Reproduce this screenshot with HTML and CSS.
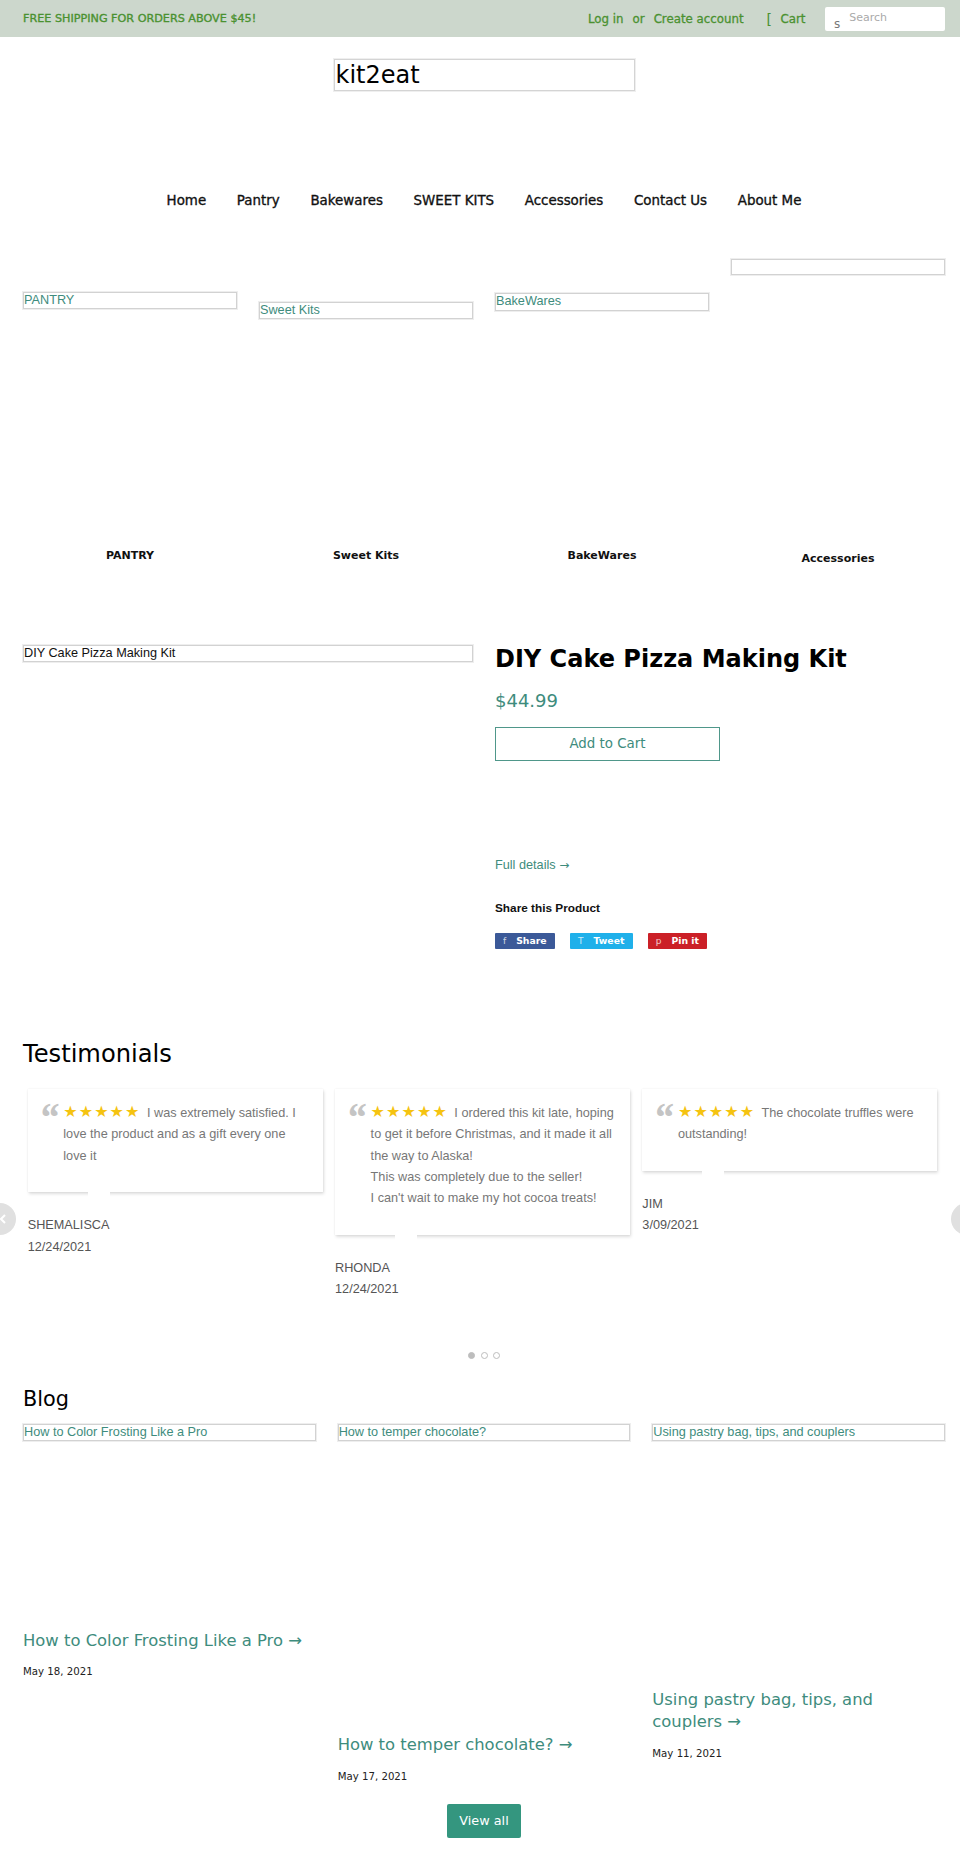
FILE: index.html
```html
<!DOCTYPE html>
<html lang="en">
<head>
<meta charset="utf-8">
<title>kit2eat</title>
<link rel="stylesheet" href="styles.css">
</head>
<body>
<div class="page">
  <div class="topbar">
    <div class="wrap topbar-inner">
      <div class="promo">FREE SHIPPING FOR ORDERS ABOVE $45!</div>
      <div class="account">
        <a class="acc-link">Log in</a><span class="or">or</span><a class="acc-link">Create account</a>
        <a class="cart"><span class="cart-ico">[</span>Cart</a>
        <div class="search"><span class="s-ico">s</span><span class="ph">Search</span></div>
      </div>
    </div>
  </div>

  <header class="wrap logo-row">
    <div class="logo">kit2eat</div>
  </header>

  <nav class="wrap menu">
    <a>Home</a><a>Pantry</a><a>Bakewares</a><a>SWEET KITS</a><a>Accessories</a><a>Contact Us</a><a>About Me</a>
  </nav>

  <section class="wrap collections">
    <a class="coll c1"><div class="coll-img"><div class="alt-box link">PANTRY</div></div><div class="coll-label">PANTRY</div></a>
    <a class="coll c2"><div class="coll-img"><div class="alt-box link">Sweet Kits</div></div><div class="coll-label">Sweet Kits</div></a>
    <a class="coll c3"><div class="coll-img"><div class="alt-box link">BakeWares</div></div><div class="coll-label">BakeWares</div></a>
    <a class="coll c4"><div class="coll-img"><div class="alt-box link"></div></div><div class="coll-label">Accessories</div></a>
  </section>

  <section class="wrap product">
    <div class="product-media"><div class="alt-box dark">DIY Cake Pizza Making Kit</div></div>
    <div class="product-info">
      <h1 class="product-title">DIY Cake Pizza Making Kit</h1>
      <div class="price">$44.99</div>
      <a class="add-cart">Add to Cart</a>
      <a class="full-details">Full details <span class="arr">→</span></a>
      <div class="share-title">Share this Product</div>
      <div class="share">
        <a class="sh fb"><span class="sh-ico">f</span>Share</a>
        <a class="sh tw"><span class="sh-ico">T</span>Tweet</a>
        <a class="sh pin"><span class="sh-ico">p</span>Pin it</a>
      </div>
    </div>
  </section>

  <section class="wrap testimonials">
    <h2 class="t-title">Testimonials</h2>
    <div class="slider">
      <div class="slide">
        <div class="card"><span class="q">“</span><span class="stars">★★★★★</span> I was extremely satisfied. I love the product and as a gift every one love it</div>
        <div class="who">SHEMALISCA</div>
        <div class="when">12/24/2021</div>
      </div>
      <div class="slide">
        <div class="card"><span class="q">“</span><span class="stars">★★★★★</span> I ordered this kit late, hoping to get it before Christmas, and it made it all the way to Alaska!<br>This was completely due to the seller!<br>I can't wait to make my hot cocoa treats!</div>
        <div class="who">RHONDA</div>
        <div class="when">12/24/2021</div>
      </div>
      <div class="slide">
        <div class="card"><span class="q">“</span><span class="stars">★★★★★</span> The chocolate truffles were outstanding!</div>
        <div class="who">JIM</div>
        <div class="when">3/09/2021</div>
      </div>
      <a class="arrow prev"><svg width="8" height="10" viewBox="0 0 8 10"><path d="M6 1 L2 5 L6 9" fill="none" stroke="#fff" stroke-width="2"/></svg></a>
      <a class="arrow next"><svg width="8" height="10" viewBox="0 0 8 10"><path d="M2 1 L6 5 L2 9" fill="none" stroke="#fff" stroke-width="2"/></svg></a>
    </div>
    <div class="dots"><span class="dot on"></span><span class="dot"></span><span class="dot"></span></div>
  </section>

  <section class="wrap blog">
    <h2 class="b-title">Blog</h2>
    <div class="posts">
      <article class="post p1">
        <div class="post-img"><div class="alt-box link">How to Color Frosting Like a Pro</div></div>
        <h3 class="post-title">How to Color Frosting Like a Pro →</h3>
        <div class="post-date">May 18, 2021</div>
      </article>
      <article class="post p2">
        <div class="post-img"><div class="alt-box link">How to temper chocolate?</div></div>
        <h3 class="post-title">How to temper chocolate? →</h3>
        <div class="post-date">May 17, 2021</div>
      </article>
      <article class="post p3">
        <div class="post-img"><div class="alt-box link">Using pastry bag, tips, and couplers</div></div>
        <h3 class="post-title">Using pastry bag, tips, and couplers →</h3>
        <div class="post-date">May 11, 2021</div>
      </article>
    </div>
    <div class="viewall-row"><a class="viewall">View all</a></div>
  </section>
</div>
</body>
</html>
```

FILE: styles.css
```css
* { box-sizing: border-box; margin: 0; padding: 0; }
html, body { overflow-x: hidden; }
body { margin: 0; background: #fff; font-family: "DejaVu Sans", sans-serif; color: #000; }
a { text-decoration: none; color: inherit; }
.page { width: 960px; overflow: hidden; padding-bottom: 40px; }
.wrap { width: 922px; margin-left: 23px; }

/* top bar */
.topbar { background: #ccd7cc; height: 37px; }
.topbar-inner { height: 37px; display: flex; align-items: center; justify-content: space-between; }
.promo { font-size: 11.2px; color: #4a9130; -webkit-text-stroke: 0.35px #4a9130; }
.account { display: flex; align-items: center; font-size: 11.8px; color: #4a9130; -webkit-text-stroke: 0.3px #4a9130; }
.or { margin: 0 9px; }
.cart { margin-left: 23px; display: flex; align-items: center; }
.cart-ico { font-size: 14px; margin-right: 8.5px; -webkit-text-stroke: 0; }
.search { margin-left: 19.5px; width: 120px; height: 24px; background: #fff; border-radius: 2px; display: flex; padding-left: 9px; -webkit-text-stroke: 0; }
.s-ico { align-self: flex-end; font-size: 12px; line-height: 12px; color: #777; padding-bottom: 1px; }
.ph { margin-left: 9px; font-size: 11px; line-height: 11px; color: #aaa; padding-top: 5.4px; }

/* logo */
.logo-row { display: flex; justify-content: center; padding-top: 22px; }
.logo { width: 301px; height: 32px; border: 1px solid #d4d4d4; box-shadow: 0 0 0 1px #efefef; font-size: 24px; line-height: 30px; padding-left: 1px; color: #000; }

/* nav */
.menu { display: flex; justify-content: center; margin-top: 100px; }
.menu a { font-size: 13.4px; line-height: 20px; padding: 0 15.35px; color: #111; -webkit-text-stroke: 0.35px #111; }

/* image placeholders */
.alt-box { border: 1px solid #d2d2d2; box-shadow: 0 0 0 1px #eeeeee; height: 17px; font-family: "Liberation Sans", sans-serif; font-size: 12.7px; line-height: 15px; overflow: hidden; white-space: nowrap; }
.alt-box.link { color: #3e8c7d; }
.alt-box.dark { color: #111; }

/* collections */
.collections { display: grid; grid-template-columns: repeat(4, 1fr); column-gap: 22px; margin-top: 48px; align-items: start; }
.coll { display: block; }
.coll-img { height: 289px; }
.c1 .coll-img { padding-top: 33px; }
.c2 .coll-img { padding-top: 43px; }
.c3 .coll-img { padding-top: 34px; }
.c3 .alt-box { height: 18px; }
.c4 .coll-img { height: 292px; }
.c4 .alt-box { height: 16px; }
.coll-label { text-align: center; font-weight: bold; font-size: 11px; line-height: 16px; color: #111; }

/* product */
.product { display: grid; grid-template-columns: 450px 450px; column-gap: 22px; margin-top: 78px; align-items: start; }
.product-info { display: flex; flex-direction: column; align-items: flex-start; }
.product-title { font-size: 24px; line-height: 28.8px; font-weight: bold; color: #000; }
.price { margin-top: 15px; font-size: 18px; line-height: 24px; color: #3e8c7d; }
.add-cart { margin-top: 14px; width: 225px; height: 34px; border: 1px solid #4f978a; color: #3e8c7d; font-size: 13.4px; display: flex; align-items: center; justify-content: center; }
.full-details { margin-top: 96px; font-family: "Liberation Sans", sans-serif; font-size: 12.7px; line-height: 16px; color: #3e8c7d; }
.arr { font-family: "DejaVu Sans", sans-serif; font-size: 12px; }
.share-title { margin-top: 27px; font-family: "Liberation Sans", sans-serif; font-weight: bold; font-size: 11.8px; line-height: 16px; color: #111; }
.share { margin-top: 17px; display: flex; gap: 15px; }
.sh { height: 16px; display: flex; align-items: center; padding: 0 8.3px 0 8px; font-size: 9.3px; font-weight: bold; color: #fff; border-radius: 1px; }
.sh-ico { font-weight: normal; font-size: 9px; opacity: .75; margin-right: 10px; }
.fb { background: #3b5998; }
.tw { background: #1fb0ea; }
.pin { background: #cb2027; }

/* testimonials */
.testimonials { margin-top: 91px; }
.t-title { font-size: 24.2px; line-height: 29px; font-weight: normal; color: #000; }
.slider { position: relative; display: flex; align-items: flex-start; margin-top: 20px; }
.slide { width: 307.33px; padding-left: 4.7px; padding-right: 7.6px; }
.card { position: relative; background: #fff; padding: 14.4px 12px 25px 35.6px; font-family: "Liberation Sans", sans-serif; font-size: 12.7px; line-height: 21.3px; color: #777; box-shadow: 0 0 2px rgba(0,0,0,.07), 1px 2px 3px rgba(0,0,0,.13); }
.card::after { content: ""; position: absolute; left: 60px; bottom: -5px; width: 22px; height: 7px; background: #fff; }
.q { position: absolute; left: 11px; top: 8px; font-family: "Liberation Serif", serif; font-style: italic; font-weight: bold; font-size: 40px; line-height: 42px; color: #c4c4c4; }
.stars { font-family: "DejaVu Sans", sans-serif; font-size: 16px; line-height: 16px; letter-spacing: 1.1px; color: #f5c310; margin-right: 3px; }
.who { margin-top: 23.4px; font-family: "Liberation Sans", sans-serif; font-size: 12.7px; line-height: 21.3px; color: #555; }
.when { font-family: "Liberation Sans", sans-serif; font-size: 12.7px; line-height: 21.3px; color: #555; }
.arrow { position: absolute; top: 114px; width: 32px; height: 32px; border-radius: 50%; background: #e0e0e0; display: flex; align-items: center; }
.arrow.prev { left: -39px; justify-content: flex-end; padding-right: 9px; }
.arrow.next { right: -38px; justify-content: flex-start; padding-left: 9px; }
.dots { display: flex; justify-content: center; gap: 5.8px; margin-top: 51px; }
.dot { width: 7px; height: 7px; border-radius: 50%; border: 1px solid #bdbdbd; }
.dot.on { background: #bdbdbd; }

/* blog */
.blog { margin-top: 28px; }
.b-title { font-size: 20.8px; line-height: 25px; font-weight: normal; color: #000; }
.posts { display: grid; grid-template-columns: repeat(3, 1fr); column-gap: 22px; margin-top: 12px; align-items: start; }
.p1 .post-img { height: 206px; }
.p2 .post-img { height: 310.5px; }
.p3 .post-img { height: 265.5px; }
.post-title { font-size: 16.4px; line-height: 22.3px; font-weight: normal; color: #3e8c7d; }
.post-date { margin-top: 13.5px; font-size: 10.2px; line-height: 14px; color: #222; }
.viewall-row { display: flex; justify-content: center; margin-top: 20.5px; }
.viewall { height: 34px; padding: 0 12.7px; background: #34967f; color: #fff; font-size: 12.8px; line-height: 34px; border-radius: 2px; }
```
